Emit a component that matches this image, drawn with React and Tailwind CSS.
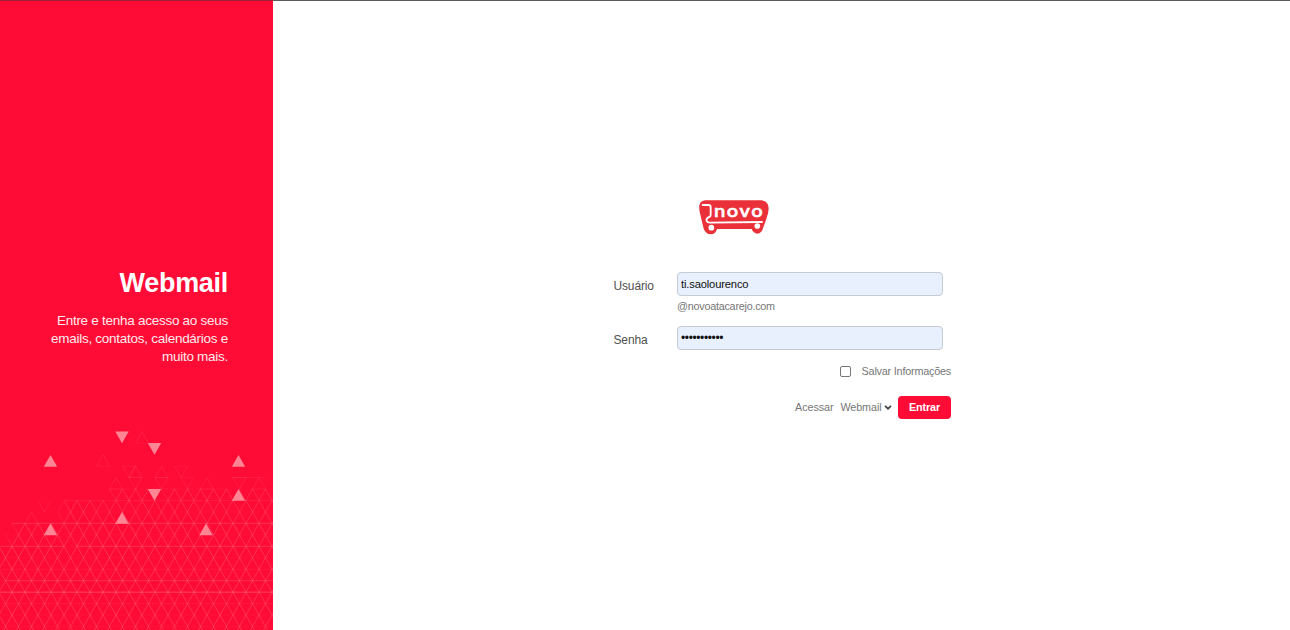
import React from "react";

const ROW = 11.46;
const BASE_Y = 7.7;

// Ranges of triangle centres present in each row, from the top row down.
const rows = [
  [[142, 142]],
  [],
  [[103, 103]],
  [[129, 135.5], [161.5, 161.5], [181, 181]],
  [[116, 116], [135.5, 135.5], [161.5, 161.5], [187.5, 187.5], [207, 207], [239.5, 239.5], [259, 259]],
  [[116, 148.5], [168, 233], [246, 272]],
  [[44.5, 44.5], [64, 285]],
  [[31.5, 31.5], [64, 285]],
  [[18.5, 285]],
  [[12, 285]],
  [[-7.5, 285]],
  [[-7.5, 285]],
  [[-7.5, 285]],
  [[-7.5, 285]],
  [[-7.5, 285]],
  [[-7.5, 285]],
  [[-7.5, 285]],
  [[-7.5, 285]],
];

// Horizontal rules that stand out from the lattice: row, start, end, opacity.
const rules = [
  [4, 232, 265, 0.1],
  [5, 109, 228, 0.05],
  [6, 64, 273, 0.07],
  [8, 12, 273, 0.2],
  [10, 0, 64, 0.18],
  [10, 77, 273, 0.18],
  [12, 0, 273, 0.06],
  [13, 5, 273, 0.2],
  [14, 0, 273, 0.32],
  [15, 5, 273, 0.05],
];

function rowPaths(ranges, row) {
  const apex = row % 2 === 0 ? 12 : 5.5;
  const top = BASE_Y + ROW * row;
  let sides = "";
  let bases = "";
  ranges.forEach(([from, to]) => {
    for (let c = from; c <= to; c += 6.5) {
      const pointsUp = Math.abs((c - apex) % 13) < 0.1;
      const tip = pointsUp ? top : top + ROW;
      const base = pointsUp ? top + ROW : top;
      sides += `M${c - 6.5} ${base}L${c} ${tip}L${c + 6.5} ${base}`;
      bases += `M${c - 6.5} ${base}h13`;
    }
  });
  return { sides, bases };
}

function Lattice() {
  return (
    <g fill="none" stroke="#ffc0c8" strokeWidth="0.9">
      {rows.map((ranges, row) => {
        const { sides, bases } = rowPaths(ranges, row);
        return (
          <g key={row}>
            <path d={sides} strokeOpacity={row < 8 ? 0.1 : 0.115} />
            <path d={bases} strokeOpacity={row < 5 ? 0.08 : 0.03} />
          </g>
        );
      })}
      {rules.map(([row, from, to, opacity]) => (
        <path
          key={`${row}-${from}`}
          d={`M${from} ${BASE_Y + ROW * row}H${to}`}
          strokeOpacity={opacity}
        />
      ))}
    </g>
  );
}

const up = [[50.5, 31.5], [238.5, 31.5], [238.5, 65.5], [122, 88.5], [50.5, 100], [206, 100]];
const down = [[122, 7.8], [154.5, 19.2], [154.5, 65.2]];

function Pattern() {
  return (
    <svg className="block h-[206px] w-full" viewBox="0 0 273 206" aria-hidden="true">
      <Lattice />
      <g fill="#ff8595">
        {up.map(([x, y]) => (
          <path key={`u${x}-${y}`} d={`M${x} ${y - 0.5}l6.7 11.7h-13.4z`} />
        ))}
        {down.map(([x, y]) => (
          <path key={`v${x}-${y}`} d={`M${x} ${y + 11.5}l6.7-11.7h-13.4z`} />
        ))}
      </g>
    </svg>
  );
}

function Logo() {
  return (
    <svg className="block h-[54px] w-[90px]" viewBox="0 0 270 162" role="img" aria-label="Novo">
      <path
        d="M45 31H214Q236 33 236 55Q236 68 229 87L220 112Q216 130 203 131Q190 130 185 117H81Q77 133 62 133Q47 132 41 116L29 65Q23 33 45 31Z"
        fill="#ea3038"
      />
      <path
        d="M38 45H55Q62 45 62 52V75Q62 80 55 82Q48 86 50 93Q52 98 60 98L216 96"
        fill="none"
        stroke="#fff"
        strokeWidth="5.5"
        strokeLinecap="round"
        strokeLinejoin="round"
      />
      <circle cx="64" cy="113" r="8.5" fill="#fff" />
      <circle cx="202" cy="108" r="8.5" fill="#fff" />
      <text
        transform="translate(72 81) scale(1.24 1)"
        fill="#fff"
        stroke="#fff"
        strokeWidth="1.6"
        fontFamily="Inter, sans-serif"
        fontWeight="500"
        fontSize="46"
        textLength="118"
        lengthAdjust="spacing"
      >
        novo
      </text>
    </svg>
  );
}

const field =
  "block h-6 w-[266px] rounded-[4px] border border-[#c5cad3] bg-[#e8f0fe] px-[3px] text-[#111] outline-none";

export default function App() {
  return (
    <div className="flex h-[630px] w-full flex-col overflow-hidden bg-white font-['Liberation_Sans',Arial,sans-serif]">
      <div className="flex h-px shrink-0">
        <div className="w-[273px] bg-[#9d2039]" />
        <div className="flex-1 bg-[#5c5c5e]" />
      </div>
      <div className="flex min-h-0 flex-1">
        <aside className="flex w-[273px] shrink-0 flex-col bg-[#ff0c36] text-white">
          <div className="pt-[266px] pr-[45px] text-right">
            <h1 className="text-[27px] leading-[32px] font-bold tracking-[-0.3px]">Webmail</h1>
            <p className="mt-[13px] text-[13.5px] leading-[18.2px] tracking-[-0.27px] text-[#ffe9ec]">
              Entre e tenha acesso ao seus
              <br />
              emails, contatos, calendários e
              <br />
              muito mais.
            </p>
          </div>
          <div className="mt-auto">
            <Pattern />
          </div>
        </aside>

        <main className="flex-1 pt-[189px] pl-[340px]">
          <form className="w-[338px]" onSubmit={(e) => e.preventDefault()}>
            <div className="pl-[77px]">
              <Logo />
            </div>
            <div className="mt-7 flex">
              <label
                htmlFor="user"
                className="w-16 pt-[7px] pl-[0.5px] text-[12px] leading-[14px] tracking-[-0.15px] text-[#505050]"
              >
                Usuário
              </label>
              <div>
                <input
                  id="user"
                  className={`${field} text-[11.2px] tracking-[-0.16px]`}
                  defaultValue="ti.saolourenco"
                />
                <div className="mt-[3px] text-[10.8px] leading-[14px] tracking-[-0.24px] text-[#777]">
                  @novoatacarejo.com
                </div>
              </div>
            </div>
            <div className="mt-[13px] flex">
              <label
                htmlFor="pass"
                className="w-16 pt-[7px] pl-[0.5px] text-[12px] leading-[14px] tracking-[-0.15px] text-[#505050]"
              >
                Senha
              </label>
              <input
                id="pass"
                type="password"
                className={`${field} text-[12px] tracking-[-0.38px]`}
                defaultValue="12345678901"
              />
            </div>
            <label className="mt-[13px] flex h-4 items-center justify-end text-[10.8px] tracking-[-0.2px] text-[#777]">
              <input
                type="checkbox"
                className="mt-px mr-[11px] size-[11px] appearance-none rounded-[2px] border border-[#767676] bg-white"
              />
              Salvar Informações
            </label>
            <div className="mt-4 flex h-6 items-center justify-end text-[10.8px] tracking-[-0.1px] text-[#777]">
              <span className="mr-[7px]">Acessar</span>
              <span>Webmail</span>
              <svg className="mr-[6px] ml-[2.5px] h-[5px] w-[8px]" viewBox="0 0 8 5" aria-hidden="true">
                <path d="M1 0.8L4 3.7L7 0.8" fill="none" stroke="#444" strokeWidth="1.7" />
              </svg>
              <button className="h-[23px] w-[53px] rounded-[4px] bg-[#ff0c36] text-[10.8px] font-bold tracking-[-0.1px] text-white">
                Entrar
              </button>
            </div>
          </form>
        </main>
      </div>
    </div>
  );
}
